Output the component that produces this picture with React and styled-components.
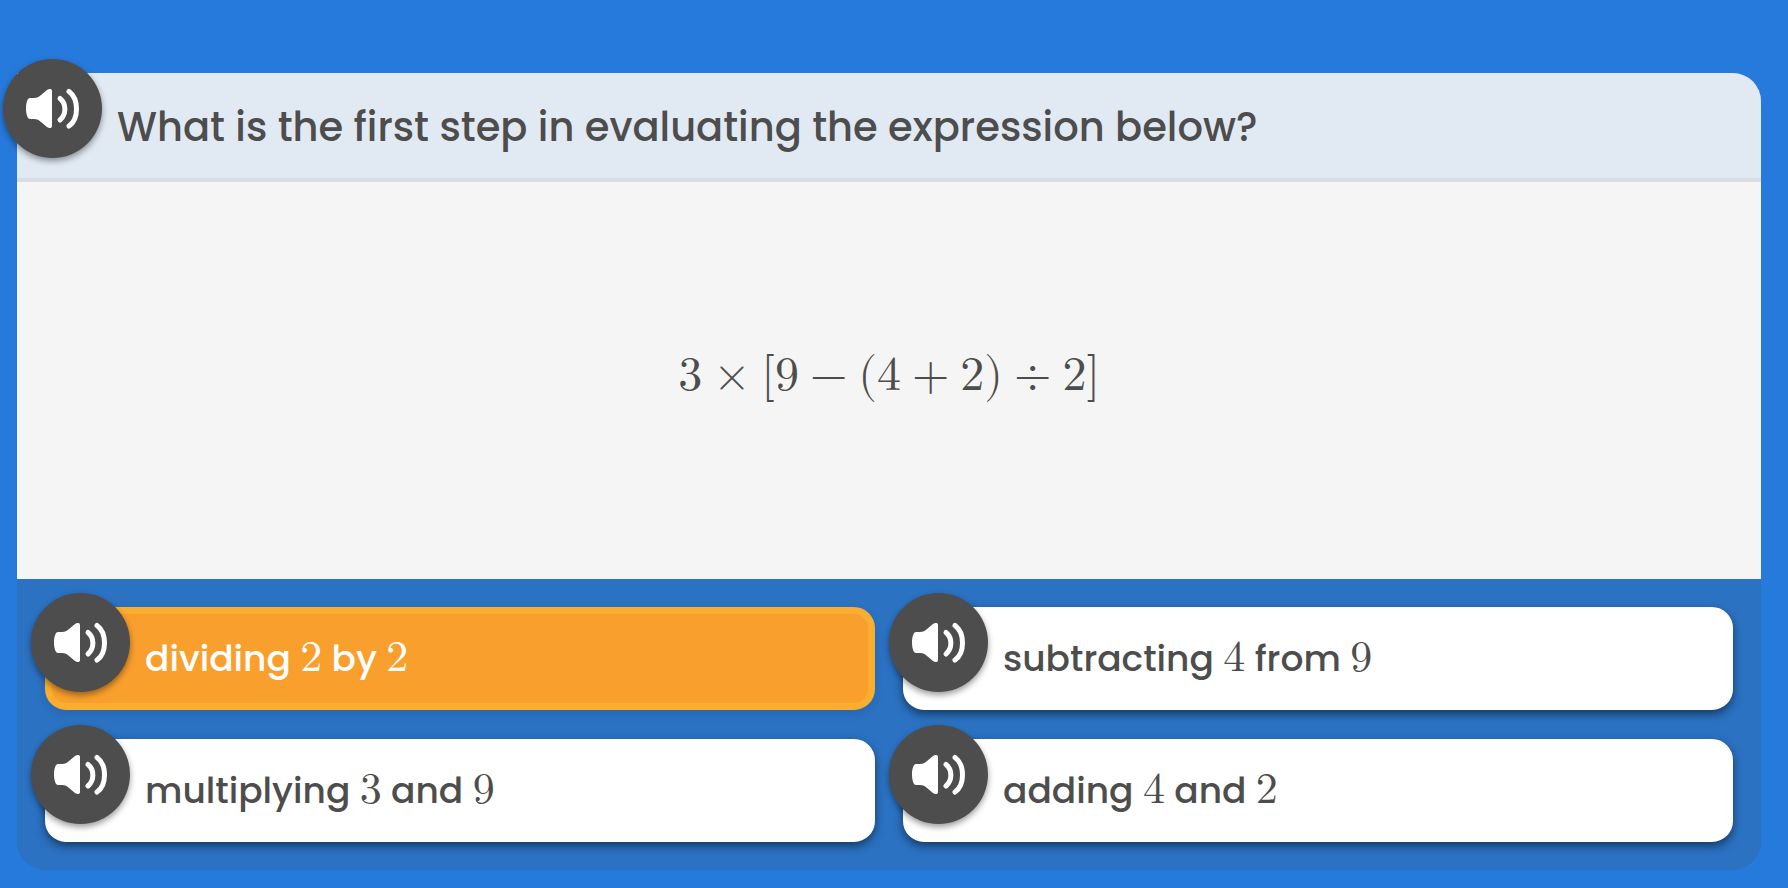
import { useState } from 'react';
import styled, { createGlobalStyle } from 'styled-components';

const colors = {
  page: '#267adb',
  panel: '#2b72c3',
  header: '#e1e9f3',
  headerLine: '#d9dde0',
  body: '#f5f5f5',
  ink: '#4d4d4d',
  selected: '#f99f2d',
  selectedLine: '#f9ae30',
};

const mathFont = "KaTeX_Main, 'Latin Modern Math', 'Latin Modern Roman', 'CMU Serif', 'Liberation Serif', serif";

const GlobalStyle = createGlobalStyle`
  * {
    box-sizing: border-box;
  }

  body {
    margin: 0;
    background: ${colors.page};
    color: ${colors.ink};
    font-family: Poppins, Inter, 'Open Sans', sans-serif;
    font-weight: 500;
  }
`;

const Page = styled.main`
  display: flex;
  flex-direction: column;
  min-height: 100vh;
  padding: 73px 27px 18px 17px;
`;

const Header = styled.header`
  position: relative;
  padding: 30px 100px 27px;
  background: ${colors.header};
  border-bottom: 4px solid ${colors.headerLine};
  border-radius: 0 28px 0 0;
`;

const Title = styled.h1`
  margin: 0;
  font-size: 40px;
  line-height: 48px;
  font-weight: 500;
`;

const Body = styled.section`
  display: flex;
  flex: 1;
  align-items: center;
  justify-content: center;
  padding: 28px 28px 40px;
  background: ${colors.body};
`;

const Expression = styled.div`
  display: flex;
  align-items: baseline;
  font-family: ${mathFont};
  font-size: 48px;
  line-height: 56px;
  font-weight: 400;
`;

const Operator = styled.span`
  margin: 0 11px;
`;

const Answers = styled.section`
  display: grid;
  grid-template-columns: 1fr 1fr;
  gap: 29px 28px;
  padding: 28px;
  background: ${colors.panel};
  border-radius: 0 0 28px 28px;
`;

const Answer = styled.div`
  position: relative;
`;

const AnswerButton = styled.button`
  display: block;
  width: 100%;
  padding: 23px 22px 22px 93px;
  border: 7px solid ${props => (props.$selected ? colors.selectedLine : '#fff')};
  border-radius: 21px;
  background: ${props => (props.$selected ? colors.selected : '#fff')};
  box-shadow: 0 4px 10px rgba(0, 0, 0, ${props => (props.$selected ? 0.1 : 0.5)});
  color: ${props => (props.$selected ? '#fff' : colors.ink)};
  font: inherit;
  font-size: 36px;
  line-height: 44px;
  text-align: left;
  cursor: pointer;
`;

const Digit = styled.span`
  font-family: ${mathFont};
  font-size: 44px;
  font-weight: 400;
  line-height: 0;
`;

const RoundButton = styled.button`
  position: absolute;
  top: -14px;
  left: -14px;
  width: 99px;
  height: 99px;
  padding: 0;
  border: 0;
  border-radius: 50%;
  background: ${colors.ink};
  box-shadow: 0 3px 6px rgba(0, 0, 0, 0.4);
  color: #fff;
  cursor: pointer;

  svg {
    display: block;
  }
`;

const Listen = ({ label }) => (
  <RoundButton type="button" aria-label={label}>
    <svg width="99" height="99" viewBox="0 0 99 99" fill="none" aria-hidden="true">
      <path
        d="M27 39H31C34 39 36 38 38 36L44 31C46 29.500 49 29.500 49 32V67C49 69.500 46 69.500 44 68L38 63C36 61 34 60 31 60H27C24.500 60 23 55 23 49.500C23 44 24.500 39 27 39Z"
        fill="currentColor"
      />
      <path
        d="M57 39.500C63.500 44.500 63.500 55.500 57 61M66 32.500C76 40 76 60 66 67"
        stroke="currentColor"
        strokeWidth="5"
        strokeLinecap="round"
      />
    </svg>
  </RoundButton>
);

const answers = [
  ['dividing', 2, 'by', 2],
  ['subtracting', 4, 'from', 9],
  ['multiplying', 3, 'and', 9],
  ['adding', 4, 'and', 2],
];

export default function App() {
  const [selected, setSelected] = useState(0);

  return (
    <>
      <GlobalStyle />
      <Page>
        <Header>
          <Title>What is the first step in evaluating the expression below?</Title>
          <Listen label="Listen to the question" />
        </Header>
        <Body>
          <Expression>
            3<Operator>×</Operator>[9<Operator>−</Operator>(4<Operator>+</Operator>2)
            <Operator>÷</Operator>2]
          </Expression>
        </Body>
        <Answers>
          {answers.map(([verb, first, link, second], index) => (
            <Answer key={verb}>
              <AnswerButton
                type="button"
                aria-pressed={selected === index}
                $selected={selected === index}
                onClick={() => setSelected(index)}
              >
                {verb} <Digit>{first}</Digit> {link} <Digit>{second}</Digit>
              </AnswerButton>
              <Listen label={`Listen to the answer ${verb}`} />
            </Answer>
          ))}
        </Answers>
      </Page>
    </>
  );
}
